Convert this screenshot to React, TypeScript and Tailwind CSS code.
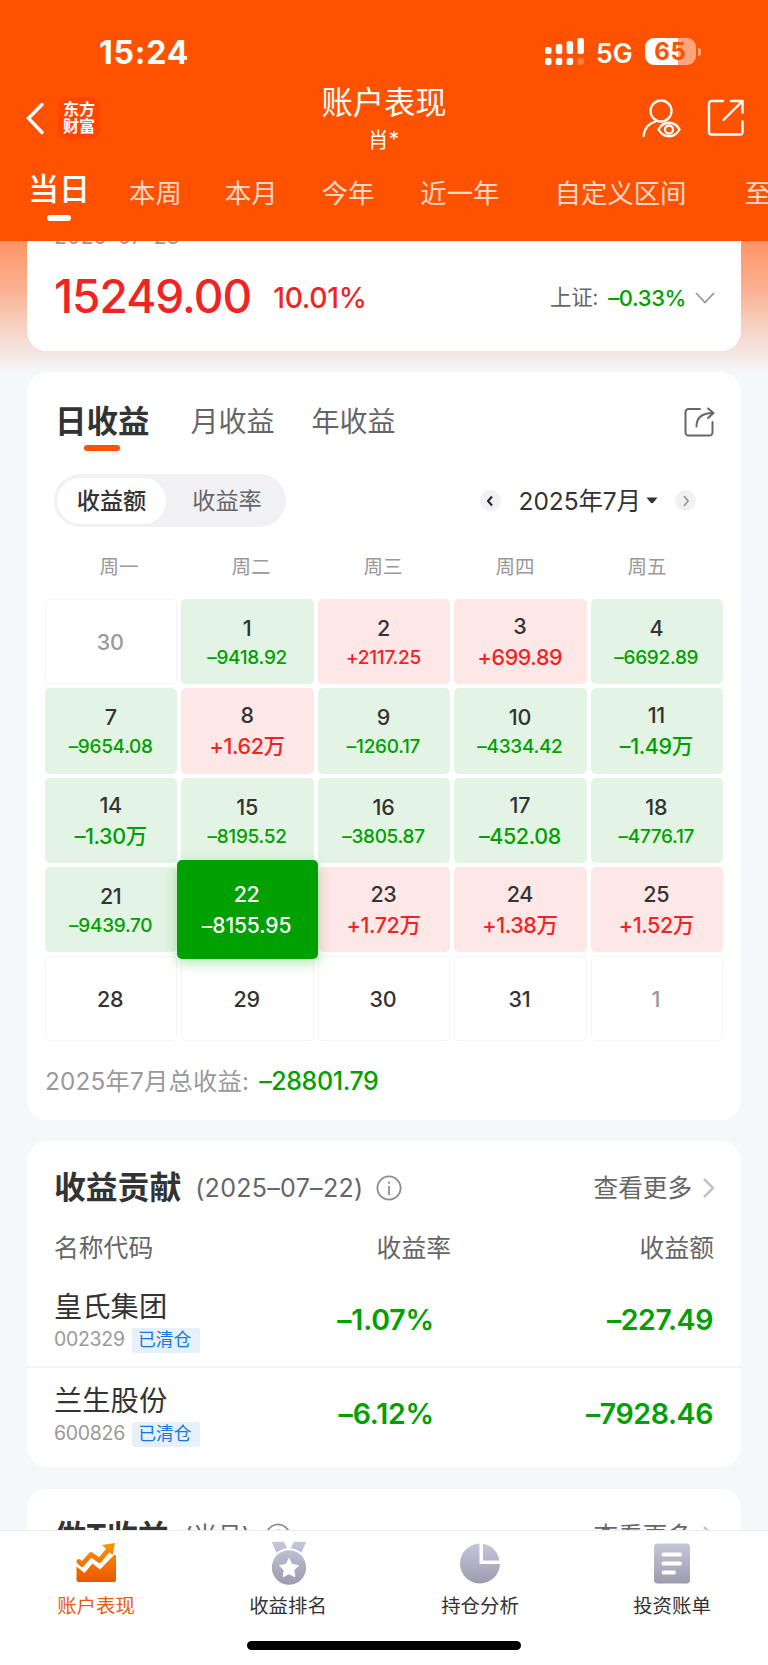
import React, { useState } from 'react';
import clsx from 'clsx';

type Day = {
  day: number;
  value?: string;
  muted?: boolean;
  selected?: boolean;
};

const rangeTabs = [
  { label: '本周', className: 'ml-[39px]' },
  { label: '本月', className: 'ml-[43px]' },
  { label: '今年', className: 'ml-[44px]' },
  { label: '近一年', className: 'ml-[46px]' },
  { label: '自定义区间', className: 'ml-[55px]' },
  { label: '至今', className: 'ml-[58px]' },
];

const weekdays = ['周一', '周二', '周三', '周四', '周五'];

const days: Day[] = [
  { day: 30, muted: true },
  { day: 1, value: '–9418.92' },
  { day: 2, value: '+2117.25' },
  { day: 3, value: '+699.89' },
  { day: 4, value: '–6692.89' },
  { day: 7, value: '–9654.08' },
  { day: 8, value: '+1.62万' },
  { day: 9, value: '–1260.17' },
  { day: 10, value: '–4334.42' },
  { day: 11, value: '–1.49万' },
  { day: 14, value: '–1.30万' },
  { day: 15, value: '–8195.52' },
  { day: 16, value: '–3805.87' },
  { day: 17, value: '–452.08' },
  { day: 18, value: '–4776.17' },
  { day: 21, value: '–9439.70' },
  { day: 22, value: '–8155.95', selected: true },
  { day: 23, value: '+1.72万' },
  { day: 24, value: '+1.38万' },
  { day: 25, value: '+1.52万' },
  { day: 28 },
  { day: 29 },
  { day: 30 },
  { day: 31 },
  { day: 1, muted: true },
];

const stocks = [
  { name: '皇氏集团', code: '002329', rate: '–1.07%', amount: '–227.49' },
  { name: '兰生股份', code: '600826', rate: '–6.12%', amount: '–7928.46' },
];

const StatusBar = () => {
  return <div className="flex h-[80px] items-start">
      <span className="ml-[99px] mt-[37px] w-[91px] text-[32px] font-bold leading-[31px] tracking-[0.8px]">15:24</span>
      <svg className="ml-[355px] mt-[38px]" width="39" height="27" viewBox="0 0 39 27" fill="#fff">
        <rect x="0" y="9" width="6.5" height="7" rx="2" />
        <rect x="10.8" y="6" width="6.5" height="10" rx="2" />
        <rect x="21.6" y="3" width="6.5" height="13" rx="2" />
        <rect x="32.4" y="0" width="6.5" height="16" rx="2" />
        <rect x="0" y="20" width="6.5" height="7" rx="2" />
        <rect x="10.8" y="20" width="6.5" height="7" rx="2" />
        <rect x="21.6" y="20" width="6.5" height="7" rx="2" />
        <rect x="32.4" y="20" width="6.5" height="7" rx="2" opacity=".25" />
      </svg>
      <span className="ml-[12px] mt-[40px] w-[37px] text-[26.5px] font-semibold leading-[27px]">5G</span>
      <div className="ml-[12px] mt-[38px] flex h-[27px] w-[51px] items-center justify-center rounded-[9px] bg-[linear-gradient(90deg,#fff_65%,#ffa680_65%)] text-[24px] font-bold leading-none tracking-[0.8px] text-[#ff5200]">
        65
      </div>
      <span className="ml-[2px] mt-[48px] h-[8px] w-[3px] rounded-r-full bg-[#ffa680]" />
    </div>;
};

const InfoIcon = () => {
  return <svg width="26" height="26" viewBox="0 0 26 26" fill="none" stroke="#8c8c8c" strokeWidth="1.8">
      <circle cx="13" cy="13" r="11.6" />
      <path d="M13 11v9" />
      <path d="M13 6.6v2.2" />
    </svg>;
};

const More = () => {
  return <div className="ml-auto flex items-center text-[24.6px] text-[#666]">
      查看更多
      <svg className="ml-[10px] mr-[-2px]" width="14" height="22" viewBox="0 0 14 22" fill="none" stroke="#c4c4c4" strokeWidth="2.6">
        <path d="M2 2l9 9-9 9" />
      </svg>
    </div>;
};

const DayCell = ({ item }: { item: Day }) => {
  const { day, value, muted, selected } = item;
  const gain = value?.startsWith('+');
  // shorter values are set one step larger
  const large = !!value && value.length < 8;
  if (!value) {
    return <div className={clsx('flex items-center justify-center rounded-[5px] border border-[#f5f5f6] pr-[2px] pt-[2px] text-[21.5px] font-medium tracking-[-0.3px]', muted ? 'text-[#999]' : 'text-[#333]')}>
        {day}
      </div>;
  }
  if (selected) {
    return <div className="relative">
        <div className="absolute -inset-x-[4px] -inset-y-[7px] z-10 flex flex-col items-center rounded-[5px] bg-[#00a000] pr-[2px] pt-[23px] font-medium text-white shadow-[0_4px_14px_rgba(0,160,0,0.3)]">
          <span className="text-[21.5px] leading-[22px] tracking-[-0.3px]">{day}</span>
          <span className="mt-[10px] text-[21px] leading-[22px] tracking-[-0.1px]">{value}</span>
        </div>
      </div>;
  }
  return <div className={clsx('flex flex-col items-center rounded-[5px] pr-px font-medium', gain ? 'bg-[#fee7e7] text-[#f12323]' : 'bg-[#e3f4e4] text-[#00a000]')}>
      <span className={clsx('text-[21.5px] leading-[22px] tracking-[-0.3px] text-[#333]', large ? 'mt-[16px]' : 'mt-[18px]')}>{day}</span>
      <span className={clsx('leading-[22px]', large ? 'mt-[9px] text-[21.5px] tracking-[-0.4px]' : 'mt-[8px] text-[19px] tracking-[-0.3px]')}>{value}</span>
    </div>;
};

const TrendIcon = () => {
  return <svg width="44" height="44" viewBox="0 0 44 44">
      <defs>
        <linearGradient id="trend" x1="0" y1="0" x2="0" y2="44" gradientUnits="userSpaceOnUse">
          <stop offset="0.05" stopColor="#fa9600" />
          <stop offset="1" stopColor="#ec5000" />
        </linearGradient>
      </defs>
      <path d="M4.8 20.5L8 23.5 17 13.5 25.5 19.5 35 8" fill="none" stroke="url(#trend)" strokeWidth="4.8" strokeLinejoin="round" strokeLinecap="round" />
      <path d="M28 4L41 2 38.5 14z" fill="url(#trend)" />
      <path d="M2.5 25.5L10.5 32 18.5 22.5 26 28.5 39.5 14.5Q42 12.5 42 15.5V39a2 2 0 0 1-2 2H4.5a2 2 0 0 1-2-2z" fill="url(#trend)" />
    </svg>;
};

const GreyGradient = ({ id }: { id: string }) => {
  return <defs>
      <linearGradient id={id} x1="0" y1="0" x2="0" y2="44" gradientUnits="userSpaceOnUse">
        <stop offset="0" stopColor="#c9c7dc" />
        <stop offset="1" stopColor="#9c9aac" />
      </linearGradient>
    </defs>;
};

const MedalIcon = () => {
  return <svg width="44" height="44" viewBox="0 0 44 44">
      <GreyGradient id="medal" />
      <path d="M5.7 0.7H18L21 7 10.5 12zM28 0.7H40.3L35.3 12 24 8.5z" fill="url(#medal)" />
      <circle cx="23" cy="26.5" r="19.3" fill="#fff" />
      <circle cx="23" cy="26.5" r="17.2" fill="url(#medal)" />
      <path d="M23 17.5l3 6 6.6 1-4.8 4.7 1.1 6.6-5.9-3.1-5.9 3.1 1.1-6.6-4.8-4.7 6.6-1z" fill="#fff" stroke="#fff" strokeWidth="1" strokeLinejoin="round" />
    </svg>;
};

const PieIcon = () => {
  return <svg width="44" height="44" viewBox="0 0 44 44">
      <GreyGradient id="pie" />
      <path d="M21.5 2.5A20 20 0 1 0 42 23H21.5z" fill="url(#pie)" />
      <path d="M25 2.8V19.5H41.3A19.5 19.5 0 0 0 25 2.8z" fill="url(#pie)" />
    </svg>;
};

const BillIcon = () => {
  return <svg width="44" height="44" viewBox="0 0 44 44">
      <GreyGradient id="bill" />
      <rect x="4" y="2.5" width="36" height="40" rx="3.5" fill="url(#bill)" />
      <path d="M13.5 13.5H30M13.5 22.5H30M13.5 31.5H24" stroke="#fff" strokeWidth="4" strokeLinecap="round" />
    </svg>;
};

const navItems = [
  { label: '账户表现', icon: TrendIcon },
  { label: '收益排名', icon: MedalIcon },
  { label: '持仓分析', icon: PieIcon },
  { label: '投资账单', icon: BillIcon },
];

const App = () => {
  const [mode, setMode] = useState('amount');
  const [activeNav, setActiveNav] = useState(0);
  return <div className="h-[1665px] w-[768px] overflow-hidden bg-[#f4f8fa] font-['Inter','Noto_Sans_CJK_SC',sans-serif] leading-none text-[#333]">
      <header className="h-[241px] overflow-hidden bg-[#ff5200] text-white">
        <StatusBar />
        <div className="grid h-[76px] grid-cols-3 items-start">
          <div className="flex items-center pl-[25px] pt-[17px]">
            <svg width="20" height="34" viewBox="0 0 20 34" fill="none" stroke="#fff" strokeWidth="3.4" strokeLinecap="round">
              <path d="M17 3.5L3.5 17.2 17 31.5" />
            </svg>
            <div className="ml-[13px] flex h-[42px] w-[42px] flex-col items-center justify-center rounded-[9px] bg-[#ff4500] text-[16px] font-bold leading-[17.5px]">
              <span>东方</span>
              <span>财富</span>
            </div>
          </div>
          <div className="flex flex-col items-center pt-[7px]">
            <h1 className="text-[31.3px] leading-[32px]">账户表现</h1>
            <span className="mt-[9px] pr-px text-[21px] leading-[24px]">肖*</span>
          </div>
          <div className="flex justify-end gap-[25px] pr-[22px] pt-[18px]">
            <svg width="42" height="42" viewBox="0 0 42 42" fill="none" stroke="#fff" strokeWidth="2.3" strokeLinecap="round">
              <circle cx="22" cy="13" r="10.5" />
              <path d="M17.5 23C9.5 25.5 5 31 4.6 38" />
              <path d="M19.5 31.5c5-9 16-9 21 0-5 9-16 9-21 0z" />
              <circle cx="30" cy="31.5" r="4" />
            </svg>
            <svg width="40" height="40" viewBox="0 0 40 40" fill="none" stroke="#fff" strokeWidth="2.4" strokeLinecap="round" strokeLinejoin="round">
              <path d="M17 3H5.5A2.5 2.5 0 0 0 3 5.500V34a2.500 2.500 0 0 0 2.500 2.500H34a2.500 2.500 0 0 0 2.500-2.500V23.500" />
              <path d="M25 3H36.500V14.500M36.500 3L17.500 22" />
            </svg>
          </div>
        </div>
        <nav className="flex h-[85px] w-[900px] items-start pl-[28px] pt-[16px]">
          <div className="flex flex-col items-center">
            <span className="text-[31px] font-medium leading-[34px]">当日</span>
            <span className="mt-[9px] h-[6px] w-[24px] rounded-full bg-white" />
          </div>
          {rangeTabs.map(tab => <span key={tab.label} className={clsx('whitespace-nowrap pt-[6px] text-[26.4px] leading-[30px] text-[#ffd9c7]', tab.className)}>
              {tab.label}
            </span>)}
        </nav>
      </header>

      <main className="h-[1289px] overflow-hidden bg-[linear-gradient(180deg,#ff9465_0px,#fab293_50px,#f6d9ce_95px,#f4e8e5_115px,#f4f8fa_131px)] px-[27px]">
        <section className="flex h-[110px] flex-col rounded-b-[20px] bg-white px-[27px]">
          <span className="mt-[-14px] text-[21px] leading-[20px] tracking-[0.3px] text-[#999]">2025–07–23</span>
          <div className="mt-[25px] flex items-center">
            <span className="mt-[-4px] text-[46px] font-medium leading-[56px] tracking-[-1px] text-[#f12323]">15249.00</span>
            <span className="ml-[22px] text-[28.3px] font-medium tracking-[-0.3px] text-[#f12323]">10.01%</span>
            <span className="ml-auto text-[21.5px] tracking-[-0.3px] text-[#666]">上证:</span>
            <span className="ml-[10px] text-[22px] font-medium tracking-[-0.4px] text-[#00a000]">–0.33%</span>
            <svg className="ml-[9px] mr-[-1px]" width="20" height="12" viewBox="0 0 20 12" fill="none" stroke="#999" strokeWidth="1.8">
              <path d="M1 1l9 9.5L19 1" />
            </svg>
          </div>
        </section>

        <section className="mt-[21px] h-[748px] rounded-[20px] bg-white px-[18px]">
          <div className="flex items-start pl-[10px] pr-[8px] pt-[33px]">
            <div className="flex flex-col items-center">
              <span className="text-[31.5px] font-bold leading-[34px]">日收益</span>
              <span className="mt-[6px] h-[6px] w-[36px] rounded-full bg-[#ff5200]" />
            </div>
            <span className="ml-[41px] text-[28px] leading-[34px] text-[#666]">月收益</span>
            <span className="ml-[37px] text-[28px] leading-[34px] text-[#666]">年收益</span>
            <svg className="ml-auto mt-px" width="32" height="32" viewBox="0 0 32 32" fill="none" stroke="#666" strokeWidth="2" strokeLinecap="round" strokeLinejoin="round">
              <path d="M17 3H5.5A3 3 0 0 0 2.500 6V26.500a3 3 0 0 0 3 3H26.500a3 3 0 0 0 3-3V16" />
              <path d="M13.500 20.500C13.500 12 19 7 30 7M25 2.500L30.500 7 25 12" />
            </svg>
          </div>

          <div className="mt-[23px] flex items-center pl-[9px]">
            <div className="flex h-[53px] w-[232px] items-center rounded-full bg-[#f1f1f4] p-[3px] text-[23.2px]">
              <button onClick={() => setMode('amount')} className={clsx('h-[46px] w-[109px] rounded-full pt-[2px]', mode === 'amount' ? 'bg-white font-medium' : 'text-[#666]')}>
                收益额
              </button>
              <button onClick={() => setMode('rate')} className={clsx('ml-[5px] h-[46px] flex-1 rounded-full pt-[2px]', mode === 'rate' ? 'bg-white font-medium' : 'text-[#666]')}>
                收益率
              </button>
            </div>
            <div className="ml-auto flex items-center pr-[27px]">
              <span className="flex h-[21px] w-[21px] items-center justify-center rounded-full bg-[#f1f1f4]">
                <svg width="8" height="12" viewBox="0 0 8 12" fill="none" stroke="#222" strokeWidth="2">
                  <path d="M6 1.5L2 6l4 4.5" />
                </svg>
              </span>
              <span className="ml-[18px] pt-px text-[24.5px] tracking-[-0.1px]">2025年7月</span>
              <svg className="ml-[5px]" width="12" height="7" viewBox="0 0 12 7" fill="#333">
                <path d="M0.5 0.5h11L7.5 5.5Q6 7 4.5 5.5z" />
              </svg>
              <span className="ml-[17px] flex h-[21px] w-[21px] items-center justify-center rounded-full bg-[#f1f1f4]">
                <svg width="8" height="12" viewBox="0 0 8 12" fill="none" stroke="#999" strokeWidth="1.8">
                  <path d="M2 1l4 5-4 5" />
                </svg>
              </span>
            </div>
          </div>

          <div className="mt-[29px] grid grid-cols-5 pl-[8px] pr-[10px] text-center text-[19.5px] leading-[22px] text-[#999]">
            {weekdays.map(name => <span key={name}>{name}</span>)}
          </div>
          <div className="mt-[21px] grid auto-rows-[85.3px] grid-cols-5 gap-[4px]">
            {days.map((item, i) => <DayCell key={i} item={item} />)}
          </div>

          <div className="mt-[25px] flex items-center leading-[30px]">
            <span className="text-[24.3px] tracking-[0.2px] text-[#999]">2025年7月总收益:</span>
            <span className="ml-[10px] text-[25px] font-medium tracking-[-0.4px] text-[#00a000]">–28801.79</span>
          </div>
        </section>

        <section className="mt-[21px] h-[326px] rounded-[20px] bg-white">
          <div className="flex items-center px-[27px] pt-[30px] leading-[34px]">
            <h2 className="text-[31.8px] font-bold">收益贡献</h2>
            <span className="ml-[14px] mr-[13px] text-[25px] tracking-[0.3px] text-[#666]">(2025–07–22)</span>
            <InfoIcon />
            <More />
          </div>
          <div className="mt-[28px] grid grid-cols-3 px-[27px] text-[24.8px] leading-[30px] text-[#666]">
            <span>名称代码</span>
            <span className="pr-[43px] text-right">收益率</span>
            <span className="text-right">收益额</span>
          </div>
          {stocks.map((stock, i) => <div key={stock.code} className={clsx('grid grid-cols-3 items-center px-[27px]', i > 0 ? 'h-[94px] border-t-2 border-[#f5f5f6]' : 'mt-[11px] h-[92px]')}>
              <div className="pt-[3px]">
                <div className="text-[28.3px] leading-[32px]">{stock.name}</div>
                <div className="mt-[5px] flex items-center">
                  <span className="text-[19.5px] tracking-[-0.3px] text-[#999]">{stock.code}</span>
                  <span className="ml-[7px] flex h-[25px] w-[68px] items-center justify-center rounded-[3px] bg-[#e5f0fa] pr-[2px] text-[17.8px] text-[#1677d8]">已清仓</span>
                </div>
              </div>
              <span className="pr-[60px] text-right text-[28.5px] font-semibold tracking-[-0.2px] text-[#00a000]">{stock.rate}</span>
              <span className="pr-px text-right text-[28.5px] font-semibold tracking-[-0.4px] text-[#00a000]">{stock.amount}</span>
            </div>)}
        </section>

        <section className="mt-[22px] h-[200px] rounded-[20px] bg-white">
          <div className="flex items-center px-[27px] pt-[30px] leading-[34px]">
            <h2 className="pl-px text-[31px] font-bold">做T收益</h2>
            <span className="ml-[15px] mr-[14px] text-[24.5px] text-[#666]">(当月)</span>
            <InfoIcon />
            <More />
          </div>
        </section>
      </main>

      <footer className="h-[135px] border-t border-[#ececec] bg-white">
        <div className="grid grid-cols-4 pt-[10px]">
          {navItems.map((item, i) => <button key={item.label} onClick={() => setActiveNav(i)} className={clsx('flex flex-col items-center text-[19.4px]', activeNav === i ? 'text-[#ea5a10]' : 'text-[#333]')}>
              <item.icon />
              <span className="mt-[10px] leading-[22px]">{item.label}</span>
            </button>)}
        </div>
        <div className="mx-auto mt-[24px] h-[9px] w-[274px] rounded-full bg-black" />
      </footer>
    </div>;
};

export default App;
